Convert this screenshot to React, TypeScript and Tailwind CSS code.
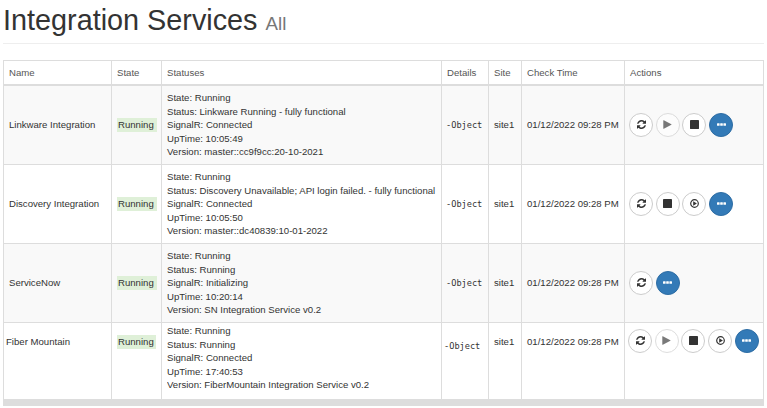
import clsx from 'clsx';

type Action = 'refresh' | 'play' | 'stop' | 'restart' | 'more';

interface Service {
  name: string;
  status: string;
  signalR: string;
  upTime: string;
  version: string;
  actions: Action[];
}

const services: Service[] = [
  {
    name: 'Linkware Integration',
    status: 'Linkware Running - fully functional',
    signalR: 'Connected',
    upTime: '10:05:49',
    version: 'master::cc9f9cc:20-10-2021',
    actions: ['refresh', 'play', 'stop', 'more'],
  },
  {
    name: 'Discovery Integration',
    status: 'Discovery Unavailable; API login failed. - fully functional',
    signalR: 'Connected',
    upTime: '10:05:50',
    version: 'master::dc40839:10-01-2022',
    actions: ['refresh', 'stop', 'restart', 'more'],
  },
  {
    name: 'ServiceNow',
    status: 'Running',
    signalR: 'Initializing',
    upTime: '10:20:14',
    version: 'SN Integration Service v0.2',
    actions: ['refresh', 'more'],
  },
  {
    name: 'Fiber Mountain',
    status: 'Running',
    signalR: 'Connected',
    upTime: '17:40:53',
    version: 'FiberMountain Integration Service v0.2',
    actions: ['refresh', 'play', 'stop', 'restart', 'more'],
  },
];

const headers = ['Name', 'State', 'Statuses', 'Details', 'Site', 'Check Time', 'Actions'];

const columns = 'grid grid-cols-[108px_50px_280px_47px_33px_103px_140px]';

function ActionIcon({ action }: { action: Action }) {
  switch (action) {
    case 'refresh':
      return (
        <svg className="w-[9px] h-[9px]" viewBox="0 0 1536 1536" fill="currentColor">
          <path d="M1511 928q0 5-1 7-64 268-268 434.5t-478 166.5q-146 0-282.5-55t-243.5-157l-129 129q-19 19-45 19t-45-19-19-45v-448q0-26 19-45t45-19h448q26 0 45 19t19 45-19 45l-137 137q71 66 161 102t187 36q134 0 250-65t186-179q11-17 53-117 8-23 30-23h192q13 0 22.5 9.5t9.5 22.5zm25-800v448q0 26-19 45t-45 19h-448q-26 0-45-19t-19-45 19-45l138-138q-148-137-349-137-134 0-250 65t-186 179q-11 17-53 117-8 23-30 23h-199q-13 0-22.5-9.5t-9.5-22.5v-7q65-268 270-434.5t480-166.5q146 0 284 55.5t245 156.5l130-129q19-19 45-19t45 19 19 45z" />
        </svg>
      );
    case 'play':
      return (
        <svg className="w-[9px] h-[9px]" viewBox="0 0 9 9" fill="currentColor">
          <path d="M.3 .6 Q.3 0 .8 .3 L8.4 4.2 Q8.7 4.5 8.4 4.7 L.8 8.7 Q.3 9 .3 8.4 Z" />
        </svg>
      );
    case 'stop':
      return (
        <svg className="w-[9px] h-[9px]" viewBox="0 0 9 9" fill="currentColor">
          <rect width="9" height="9" rx=".4" />
        </svg>
      );
    case 'restart':
      return (
        <svg className="w-[9px] h-[9px]" viewBox="0 0 9 9">
          <circle cx="4.5" cy="4.5" r="3.8" fill="none" stroke="currentColor" strokeWidth="1.2" />
          <path d="M3.2 2.2 L6.9 4.5 L3.2 6.8 Z" fill="currentColor" />
        </svg>
      );
    default:
      return (
        <svg className="w-[9px] h-[3px]" viewBox="0 0 9 3" fill="currentColor">
          <rect x="0" y=".2" width="2.6" height="2.6" rx=".5" />
          <rect x="3.2" y=".2" width="2.6" height="2.6" rx=".5" />
          <rect x="6.4" y=".2" width="2.6" height="2.6" rx=".5" />
        </svg>
      );
  }
}

function ActionButton({ action }: { action: Action }) {
  return (
    <button
      className={clsx(
        'w-6 h-6 pb-px shrink-0 rounded-full border flex items-center justify-center',
        action === 'more' ? 'bg-[#337ab7] border-[#2e6da4] text-white' : 'bg-white border-[#ccc] text-[#333]',
        action === 'play' && 'opacity-65',
      )}
    >
      <ActionIcon action={action} />
    </button>
  );
}

function ServiceRow({ service, index }: { service: Service; index: number }) {
  const last = index === services.length - 1;
  const cell = clsx('border-l border-[#ddd] flex pl-[5px]', last ? 'items-start' : 'items-center');

  return (
    <div
      className={clsx(
        columns,
        last ? 'h-[76px]' : 'h-[79px] border-b border-[#ddd]',
        index % 2 === 0 && 'bg-[#f9f9f9]',
      )}
    >
      <div className={clsx(cell, last && 'pt-3 pl-[2px]!')}>{service.name}</div>
      <div className={clsx(cell, last && 'pt-3')}>
        <span className={clsx('bg-[#dff0d8] h-[14px] leading-[14px] pl-px', last ? 'w-[39px]' : 'w-10')}>Running</span>
      </div>
      <div className={clsx(cell, last && 'pt-1')}>
        <div className={clsx(last && 'overflow-hidden')}>
          <div className={clsx('leading-[13.5px]', last && '-mt-[3px]')}>
            <p>State: Running</p>
            <p>Status: {service.status}</p>
            <p>SignalR: {service.signalR}</p>
            <p>UpTime: {service.upTime}</p>
            <p>Version: {service.version}</p>
          </div>
        </div>
      </div>
      <div className={clsx(cell, last && 'pt-4 pl-[3px]!')}>
        <span>-</span>
        <span className="pl-px font-['DejaVu_Sans_Mono',monospace] text-[8.6px]">Object</span>
      </div>
      <div className={clsx(cell, last && 'pt-3')}>site1</div>
      <div className={clsx(cell, last && 'pt-3')}>{'01/12/2022 09:28 PM'}</div>
      <div className={clsx(cell, 'gap-[2.7px] border-r', last ? 'pt-[6px] pl-[3px]!' : 'pl-1!')}>
        {service.actions.map((action) => (
          <ActionButton key={action} action={action} />
        ))}
      </div>
    </div>
  );
}

export default function App() {
  return (
    <div className="h-[408px] bg-white pl-[3px] pr-[3px] overflow-hidden font-['Liberation_Sans',Arial,sans-serif] text-[9.6px] leading-[14px] text-[#333] whitespace-nowrap">
      <header className="h-11 border-b border-[#eee] pt-1">
        <h1 className="text-[28.8px] leading-8">
          Integration Services <small className="text-[18.72px] text-[#777]">All</small>
        </h1>
      </header>

      <main className="mt-4 w-[761px] border-b-7 border-[#ddd]">
        <div className={clsx(columns, 'h-[26px] border-t border-b-2 border-[#ddd] text-[#555]')}>
          {headers.map((header) => (
            <div key={header} className="border-l last:border-r border-[#ddd] pl-[5px] flex items-center">
              {header}
            </div>
          ))}
        </div>
        {services.map((service, index) => (
          <ServiceRow key={service.name} service={service} index={index} />
        ))}
      </main>
    </div>
  );
}
